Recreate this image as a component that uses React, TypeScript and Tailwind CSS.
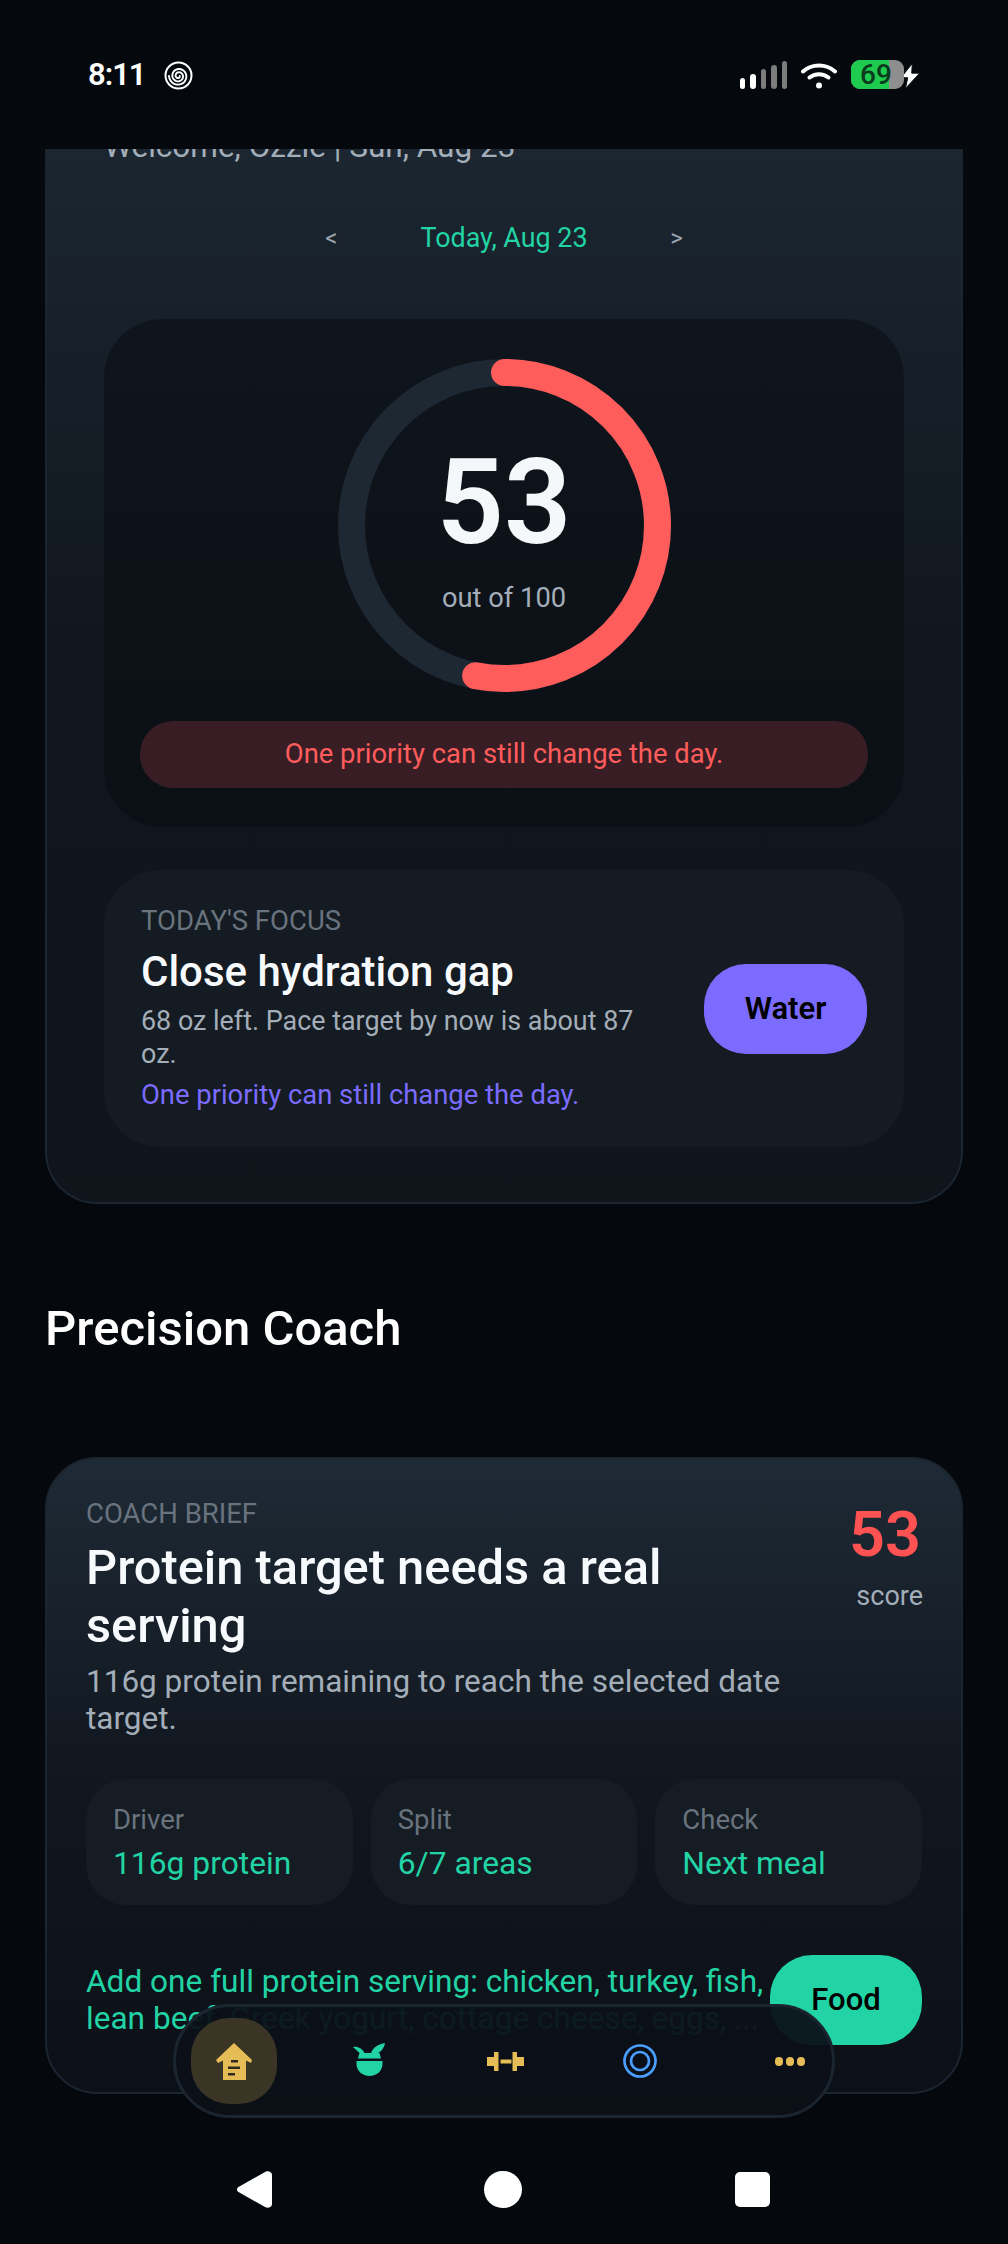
const font = "font-['Roboto','Noto_Sans',sans-serif]";

// little spiral next to the clock
const spiral = Array.from({ length: 60 }, (_, i) => {
  const t = (i / 59) * Math.PI * 5;
  const r = 1.2 + (t / (Math.PI * 5)) * 8.3;
  return `${i === 0 ? "M" : "L"}${(14.5 + r * Math.cos(t)).toFixed(2)} ${(15 + r * Math.sin(t)).toFixed(2)}`;
}).join("");

const StatusBar = () => (
  <div className="h-[149px] shrink-0 flex items-start justify-between pt-[60px] pl-[88px] pr-[86px] relative z-10 bg-[#05090d]">
    <div className="flex items-center gap-[18px] h-[30px]">
      <span className="text-[31px] font-semibold text-white leading-[30px] tracking-[-1px]">8:11</span>
      <svg width="29" height="29" viewBox="0 0 29 29" fill="none" stroke="white">
        <circle cx="14.5" cy="14.5" r="13" strokeWidth="2" />
        <path d={spiral} strokeWidth="1.9" strokeLinecap="round" />
      </svg>
    </div>
    <div className="flex items-start">
      <div className="flex items-end gap-[5px] h-[28px] mt-[1px]">
        <div className="w-[5.500px] h-[11px] rounded-full bg-white" />
        <div className="w-[5.500px] h-[15px] rounded-full bg-white" />
        <div className="w-[5.500px] h-[20px] rounded-full bg-[#7c7c7c]" />
        <div className="w-[5.500px] h-[24px] rounded-full bg-[#7c7c7c]" />
        <div className="w-[5.500px] h-[28px] rounded-full bg-[#7c7c7c]" />
      </div>
      <svg className="ml-[14px] mt-[2px]" width="36" height="27" viewBox="0 0 36 27" fill="none" stroke="white" strokeLinecap="round">
        <path d="M2 9.500C11 1.500 25 1.500 34 9.500" strokeWidth="4" />
        <path d="M8.500 15.500C14 11 22 11 27.500 15.500" strokeWidth="4" />
        <circle cx="18" cy="23.500" r="3" fill="white" stroke="none" />
      </svg>
      <div className="relative ml-[14px] h-[29px] w-[53px] rounded-[9px] bg-[#8e8e8e]">
        <div className="h-full w-[38px] rounded-l-[9px] bg-[#1ecb4f]" />
        <span className="absolute left-[9px] top-0 text-[28px] leading-[29px] font-medium text-[#0b3a1c]">69</span>
      </div>
      <svg className="-ml-[6px] mt-[3px]" width="24" height="26" viewBox="0 0 20 23" fill="white" stroke="#05090d" strokeWidth="0.8">
        <path d="M12 0.500 2 13h6l-2 9.500L18.500 9H11.500z" />
      </svg>
    </div>
  </div>
);

const Stat = ({ label, value }: { label: string; value: string }) => (
  <div className="flex-1 h-[126px] rounded-[40px] bg-[#151c23] pl-[27px] pt-[27px]">
    <div className="text-[27.500px] leading-[28px] text-[#69737e]">{label}</div>
    <div className="mt-[11px] text-[31.800px] leading-[36px] text-[#22d3a5]">{value}</div>
  </div>
);

const NavBar = () => (
  <div className="absolute left-[173px] top-[1855px] w-[662px] h-[114px] rounded-[57px] border-[3px] border-[#1b2530] bg-[#0c1118]/95 flex items-center pl-[15px]">
    <div className="w-[86px] h-[86px] rounded-[38px] bg-[#3b3526] flex items-center justify-center">
      <svg width="36" height="37" viewBox="0 0 36 37" fill="#e6bc57">
        <path d="M18 0 36 17l-1 3-5-2.500V37H7V17.500L2 20l-2-3z" />
        <path d="M15 17h7v2.500h-7zM12 23.500h12V26H12zM12 30h7v2.500h-7z" fill="#2f2b20" />
      </svg>
    </div>
    <svg className="ml-[76px] -mt-[4px]" width="33" height="33" viewBox="0 0 33 33" fill="#22d3a5">
      <path d="M3.500 18h26v3c0 7-6 12-13 12s-13-5-13-12z" />
      <path d="M5 15.500 6.500 10h20L28 15.500z" />
      <path d="M0 4C4 3 9 5 11.500 10H6.500z" />
      <path d="M18 10C20 4 26 1 32 0 31 6 27 10 22 11z" />
    </svg>
    <svg className="ml-[101px]" width="37" height="19" viewBox="0 0 37 19" fill="#e6bc57">
      <path d="M0 5h7V0h4.500v19H7v-5H0zM37 5h-7V0h-4.500v19H30v-5h7zM13.500 7.500h11v4h-11z" />
    </svg>
    <svg className="ml-[99px]" width="34" height="34" viewBox="0 0 34 34" fill="none" stroke="#4a9eff" strokeWidth="2.700">
      <circle cx="17" cy="17" r="15.500" />
      <circle cx="17" cy="17" r="9" />
    </svg>
    <div className="ml-[118px] flex gap-[3px]">
      <div className="w-[8px] h-[9px] rounded-full bg-[#e6bc57]" />
      <div className="w-[8px] h-[9px] rounded-full bg-[#e6bc57]" />
      <div className="w-[8px] h-[9px] rounded-full bg-[#e6bc57]" />
    </div>
  </div>
);

const RING = 2 * Math.PI * 153;

const App = () => {
  return (
    <div className={`${font} h-[2244px] w-[1008px] bg-[#05090d] flex flex-col overflow-hidden relative`}>
      <StatusBar />
      <div className="flex-1 min-h-0 px-[45px] relative">
        {/* score card */}
        <div className="-mt-[30px] h-[1085px] rounded-b-[52px] border-2 border-t-0 border-[#1b2530] bg-gradient-to-b from-[#1c2732] via-[#10161d] to-[#10151c] px-[57px]">
          <div className="pt-[9px] text-[31.500px] leading-[37px] text-[#a3aeb9]">Welcome, Ozzie | Sun, Aug 23</div>
          <div className="mt-[55px] h-[36px] flex items-center justify-center text-[#9aa5b1] text-[24px]">
            <span className="w-[14px] text-center">&lt;</span>
            <span className="mx-[82px] text-[26.900px] leading-[36px] text-[#22d3a5]">Today, Aug 23</span>
            <span className="w-[14px] text-center">&gt;</span>
          </div>
          <div className="mt-[63px] h-[508px] rounded-[58px] bg-gradient-to-b from-[#0f151c] to-[#0b0f16] px-[36px] pt-[40px]">
            <div className="relative mx-auto w-[333px] h-[333px]">
              <svg width="333" height="333" viewBox="0 0 333 333" fill="none" className="-rotate-90">
                <circle cx="166.500" cy="166.500" r="153" stroke="#1d2833" strokeWidth="27" />
                <circle cx="166.500" cy="166.500" r="153" stroke="#ff5c5c" strokeWidth="27" strokeLinecap="round" strokeDasharray={`${RING * 0.53} ${RING}`} />
              </svg>
              <div className="absolute inset-0 flex flex-col items-center">
                <div className="mt-[82px] text-[118px] leading-[124px] font-semibold text-[#f4f8fb]">53</div>
                <div className="mt-[17px] text-[27.300px] leading-[32px] text-[#a3aeb9]">out of 100</div>
              </div>
            </div>
            <div className="mt-[29px] h-[67px] rounded-[33px] bg-[#381e24] flex items-center justify-center text-[27.400px] text-[#ff5c5c]">
              One priority can still change the day.
            </div>
          </div>
          <div className="mt-[43px] h-[277px] rounded-[56px] bg-[#141b22] pl-[37px] pr-[37px] pt-[36px] flex items-start justify-between">
            <div className="w-[520px]">
              <div className="text-[27.500px] leading-[30px] text-[#69737e]">TODAY'S FOCUS</div>
              <div className="mt-[10px] text-[42px] leading-[52px] font-medium text-[#f7fafc]">Close hydration gap</div>
              <div className="mt-[7px] text-[26.900px] leading-[33px] text-[#a3aeb9]">68 oz left. Pace target by now is about 87 oz.</div>
              <div className="mt-[7px] text-[27.400px] leading-[34px] text-[#7b6cff]">One priority can still change the day.</div>
            </div>
            <div className="mt-[58px] w-[163px] h-[90px] rounded-[42px] bg-[#7b6cff] flex items-center justify-center text-[31px] font-semibold text-black">Water</div>
          </div>
        </div>

        <div className="mt-[97px] text-[49px] leading-[56px] font-medium text-white">Precision Coach</div>

        {/* coach card */}
        <div className="mt-[100px] h-[637px] rounded-[52px] border-2 border-[#1b2530] bg-gradient-to-b from-[#1e2a36] via-[#11171f] via-50% to-[#0c1118] px-[39px] pt-[40px]">
          <div className="flex justify-between items-start">
            <div className="w-[710px]">
              <div className="text-[27.500px] leading-[30px] text-[#69737e]">COACH BRIEF</div>
              <div className="mt-[10px] text-[48.800px] leading-[58px] font-medium text-[#f7fafc]">Protein target needs a real serving</div>
              <div className="mt-[8px] text-[31.500px] leading-[37px] text-[#a3aeb9]">116g protein remaining to reach the selected date target.</div>
            </div>
            <div className="flex flex-col items-end -mr-[1px]">
              <div className="mt-[-1px] text-[63px] leading-[74px] font-semibold text-[#ff5252] pr-[2px]">53</div>
              <div className="mt-[8px] text-[27px] leading-[32px] text-[#a3aeb9]">score</div>
            </div>
          </div>
          <div className="mt-[42px] flex gap-[18px]">
            <Stat label="Driver" value="116g protein" />
            <Stat label="Split" value="6/7 areas" />
            <Stat label="Check" value="Next meal" />
          </div>
          <div className="mt-[50px] flex items-center gap-[2px]">
            <div className="flex-1 text-[31.600px] leading-[37px] text-[#22d3a5]">
              Add one full protein serving: chicken, turkey, fish, lean beef, Greek yogurt, cottage cheese, eggs, ...
            </div>
            <div className="w-[152px] h-[90px] shrink-0 rounded-[42px] bg-[#22d3a5] flex items-center justify-center text-[31px] font-medium text-black">Food</div>
          </div>
        </div>
        <NavBar />
      </div>

      {/* android nav */}
      <div className="absolute left-0 bottom-0 w-full h-[117px] bg-[#05090d] flex items-start pt-[44px]">
        <svg className="ml-[237px]" width="35" height="37" viewBox="0 0 35 37" fill="white">
          <path d="M1.500 16 28.500 .7C31 -.500 35 .5 35 4v29c0 3.500-4 4.500-6.500 3.300L1.500 21C-.5 20-.5 17 1.500 16z" />
        </svg>
        <div className="ml-[212px] w-[38px] h-[37px] rounded-full bg-white" />
        <div className="ml-[213px] w-[35px] h-[35px] rounded-[5px] bg-white mt-[1px]" />
      </div>
    </div>
  );
};

export default App;
